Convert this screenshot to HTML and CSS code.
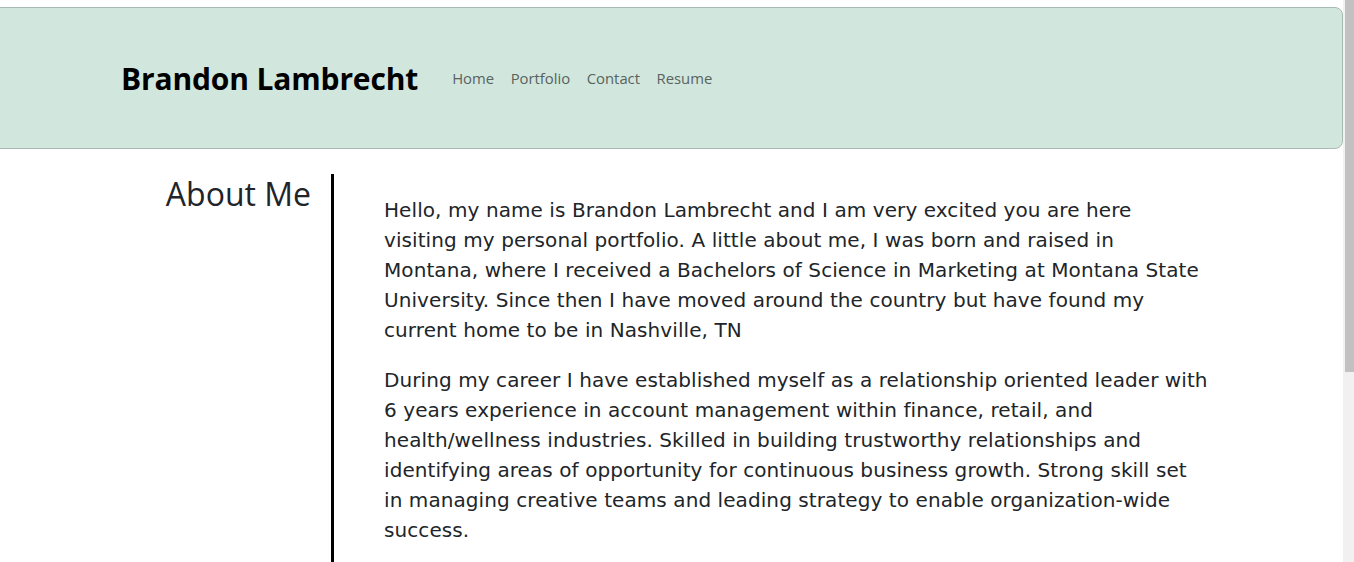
FILE: index.html
```html
<!DOCTYPE html>
<html lang="en">
<head>
<meta charset="utf-8">
<title>Brandon Lambrecht</title>
<link rel="stylesheet" href="styles.css">
</head>
<body>
<header class="site-header">
  <h1 class="brand">Brandon Lambrecht</h1>
  <nav class="nav">
    <a href="#" class="nav-link">Home</a>
    <a href="#" class="nav-link">Portfolio</a>
    <a href="#" class="nav-link">Contact</a>
    <a href="#" class="nav-link">Resume</a>
  </nav>
</header>
<main class="about">
  <div class="about-side">
    <h2 class="about-title">About Me</h2>
  </div>
  <div class="about-body">
    <p>Hello, my name is Brandon Lambrecht and I am very excited you are here visiting my personal portfolio. A little about me, I was born and raised in Montana, where I received a Bachelors of Science in Marketing at Montana State University. Since then I have moved around the country but have found my current home to be in Nashville, TN</p>
    <p>During my career I have established myself as a relationship oriented leader with 6 years experience in account management within finance, retail, and health/wellness industries. Skilled in building trustworthy relationships and identifying areas of opportunity for continuous business growth. Strong skill set in managing creative teams and leading strategy to enable organization-wide success.</p>
  </div>
</main>
<div class="scrollbar" aria-hidden="true"><div class="scrollbar-thumb"></div></div>
</body>
</html>
```
FILE: styles.css
```css
body {
  margin: 0 11px 0 0;
  font-family: "Open Sans", "Noto Sans", sans-serif;
  color: #212529;
  background: #fff;
}

.scrollbar {
  position: fixed;
  top: 0;
  right: 0;
  width: 11px;
  height: 100vh;
  background: #f1f1f1;
}

.scrollbar-thumb {
  margin-left: 2px;
  height: 372px;
  background: #c1c1c1;
}

.site-header {
  margin: 7px 0 0 -8px;
  height: 140px;
  background: #d1e7dd;
  border: 1px solid #a9b9b3;
  border-radius: 8px;
  display: flex;
  align-items: center;
  padding-left: 128px;
}

.brand {
  margin: 0;
  font-size: 30px;
  font-weight: 700;
  color: #000;
  letter-spacing: -0.15px;
}

.nav {
  display: flex;
  gap: 16.5px;
  margin-left: 34px;
}

.nav-link {
  font-size: 14.85px;
  color: #5a625e;
  text-decoration: none;
}

.about {
  display: flex;
  margin-top: 25px;
  min-height: 680px;
}

.about-side {
  width: 311px;
  margin-right: 20px;
  text-align: right;
}

.about-title {
  margin: -2px 0 0;
  font-size: 32px;
  font-weight: 400;
  color: #212529;
}

.about-body {
  border-left: 3px solid #000;
  padding: 21px 0 0 50px;
  width: 825px;
}

.about-body p {
  margin: 0 0 20px;
  font-family: "DejaVu Sans", Verdana, sans-serif;
  font-size: 20px;
  line-height: 30px;
  letter-spacing: 0.08px;
  color: #212529;
}
```
